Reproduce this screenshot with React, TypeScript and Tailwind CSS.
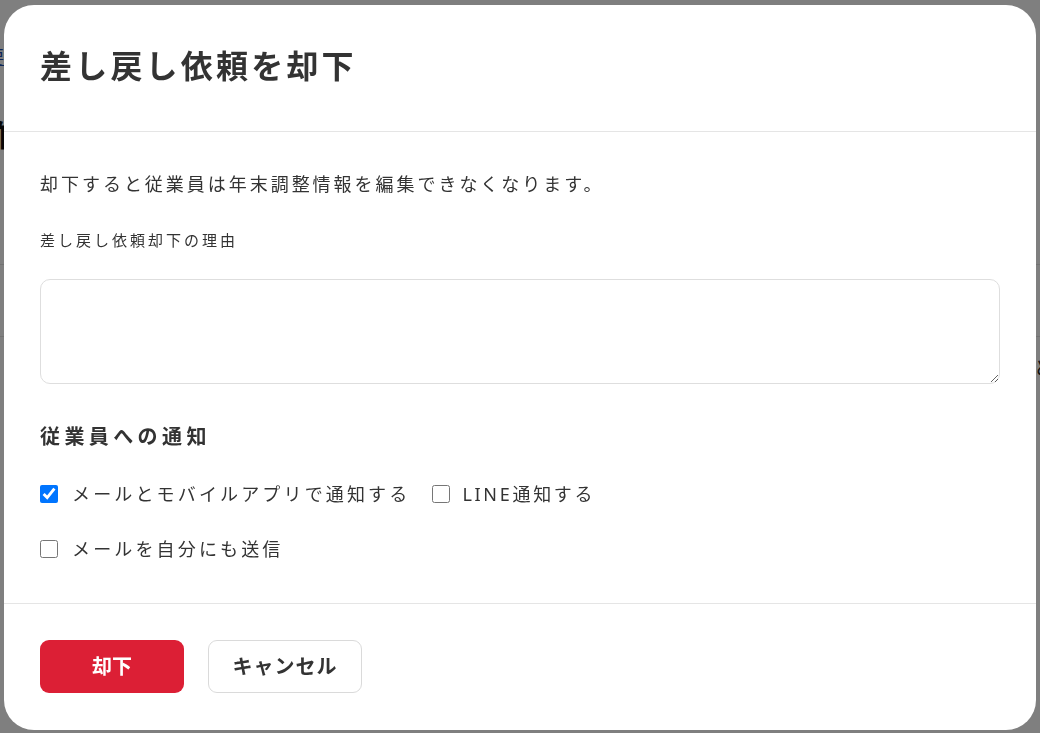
import { useState } from 'react';

const jp = { fontFamily: '"Noto Sans", "Noto Sans CJK JP", sans-serif' };

export default function App() {
  const [reason, setReason] = useState('');
  const [notifyMail, setNotifyMail] = useState(true);
  const [notifyLine, setNotifyLine] = useState(false);
  const [sendCopy, setSendCopy] = useState(false);

  return (
    <div className="relative h-screen w-full overflow-hidden bg-white" style={jp}>
      {/* Page behind the dialog */}
      <a className="absolute left-[-14px] top-[44px] text-[18px] text-[#1a4bb0] underline">要</a>
      <div className="absolute left-[-16px] top-[112px] text-[30px] font-bold text-[#111]">作</div>
      <div className="absolute left-0 top-[264px] h-px w-full bg-[#e4e4e4]" />
      <div className="absolute left-0 top-[336px] h-px w-full bg-[#e4e4e4]" />
      <div className="absolute left-[1034px] top-[355px] text-[18px] text-[#222]">と</div>

      {/* Overlay + dialog */}
      <div className="fixed inset-0 bg-black/50 pl-[4px] pt-[5px]">
        <div className="flex w-[1032px] flex-col overflow-hidden rounded-[30px] bg-white text-[#333]">
          <div className="flex h-[127px] items-center border-b border-[#e5e5e5] px-9 pb-[4px]">
            <h2 className="text-[32px] font-bold tracking-[0.1em]">差し戻し依頼を却下</h2>
          </div>

          <div className="flex flex-col border-b border-[#e5e5e5] px-9 pt-[39px] pb-[39px]">
            <p className="text-[18px] leading-[27px] tracking-[0.165em]">
              却下すると従業員は年末調整情報を編集できなくなります。
            </p>
            <label className="mt-[31px] text-[15px] leading-[22px] tracking-[0.2em]">差し戻し依頼却下の理由</label>
            <textarea
              value={reason}
              onChange={(e) => setReason(e.target.value)}
              className="mt-[28px] h-[105px] w-full rounded-[10px] border border-[#dedede] p-3 text-[16px] outline-none"
            />

            <h3 className="mt-[38px] text-[20px] font-bold leading-[30px] tracking-[0.22em]">従業員への通知</h3>

            <div className="mt-[27px] flex h-[30px] items-center">
              <label className="flex items-center">
                <input
                  type="checkbox"
                  checked={notifyMail}
                  onChange={(e) => setNotifyMail(e.target.checked)}
                  className="m-0 h-[18px] w-[18px] accent-[#0075ff]"
                />
                <span className="ml-[14px] text-[18px] tracking-[0.175em]">メールとモバイルアプリで通知する</span>
              </label>
              <label className="ml-[22px] flex items-center">
                <input
                  type="checkbox"
                  checked={notifyLine}
                  onChange={(e) => setNotifyLine(e.target.checked)}
                  className="m-0 h-[18px] w-[18px]"
                />
                <span className="ml-[12px] text-[18px] tracking-[0.15em]">LINE通知する</span>
              </label>
            </div>

            <div className="mt-[25px] flex h-[30px] items-center">
              <label className="flex items-center">
                <input
                  type="checkbox"
                  checked={sendCopy}
                  onChange={(e) => setSendCopy(e.target.checked)}
                  className="m-0 h-[18px] w-[18px]"
                />
                <span className="ml-[14px] text-[18px] tracking-[0.175em]">メールを自分にも送信</span>
              </label>
            </div>
          </div>

          <div className="flex items-center gap-6 px-9 pt-[36px] pb-[37px]">
            <button className="h-[53px] w-[144px] rounded-[9px] bg-[#dc1f35] text-[20px] font-bold text-white">
              却下
            </button>
            <button className="h-[53px] w-[154px] rounded-[9px] border border-[#dadada] bg-white text-[20px] font-bold tracking-[0.05em] text-[#333]">
              キャンセル
            </button>
          </div>
        </div>
      </div>
    </div>
  );
}
